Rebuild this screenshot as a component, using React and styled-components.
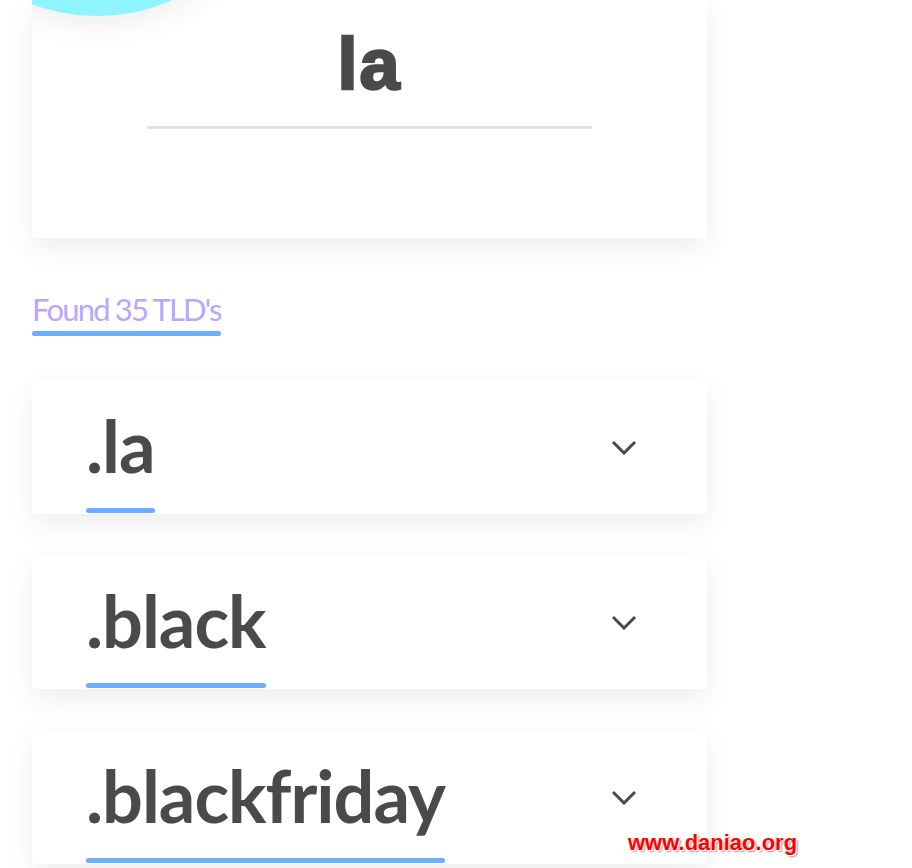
import React from 'react'
import styled, { createGlobalStyle } from 'styled-components'

const GlobalStyle = createGlobalStyle`
  html, body {
    margin: 0;
    padding: 0;
    background: #fff;
  }
  body {
    font-family: "Liberation Sans", Arial, sans-serif;
    overflow: hidden;
  }
`

const Page = styled.div`
  position: relative;
  width: 912px;
  height: 868px;
  padding: 0 0 0 32px;
  box-sizing: border-box;
  overflow: hidden;
`

const Column = styled.div`
  width: 675px;
  display: flex;
  flex-direction: column;
`

const HeroCard = styled.div`
  position: relative;
  height: 238px;
  background: #fff;
  border-radius: 0 0 4px 4px;
  box-shadow: 0 10px 28px rgba(0, 0, 0, 0.07);
  overflow: hidden;
  display: flex;
  flex-direction: column;
  align-items: center;
  padding-top: 22px;
  box-sizing: border-box;
`

const Bubble = styled.div`
  position: absolute;
  left: -120px;
  top: -354px;
  width: 370px;
  height: 370px;
  border-radius: 50%;
  background: #8ef5ff;
  box-shadow: 0 12px 26px rgba(0, 0, 0, 0.06);
`

const HeroName = styled.h1`
  margin: 0;
  font-family: "Liberation Sans", Arial, sans-serif;
  font-weight: 700;
  font-size: 72px;
  line-height: 84px;
  color: #4a4a4a;
  -webkit-text-stroke: 2.5px #4a4a4a;
  letter-spacing: 2px;
`

const Rule = styled.div`
  width: 445px;
  height: 3px;
  background: #e2e2e2;
  margin-top: 20px;
`

const Found = styled.div`
  margin-top: 53px;
  align-self: flex-start;
  display: flex;
  flex-direction: column;
`

const FoundText = styled.span`
  font-family: Lato, sans-serif;
  font-weight: 400;
  font-size: 31px;
  line-height: 36px;
  color: #b9a6ff;
  letter-spacing: -1.8px;
`

const Bar = styled.div`
  height: ${p => p.$h || 5}px;
  border-radius: 3px;
  background: #6aaeff;
  margin-top: ${p => p.$gap || 0}px;
`

const List = styled.div`
  margin-top: 44px;
  display: flex;
  flex-direction: column;
  gap: 41px;
`

const Card = styled.div`
  height: 134px;
  background: #fff;
  border-radius: 4px;
  box-shadow: 0 10px 28px rgba(0, 0, 0, 0.07);
  display: flex;
  align-items: center;
  justify-content: space-between;
  padding: 0 70px 0 54px;
  box-sizing: border-box;
`

const TitleBlock = styled.div`
  align-self: flex-end;
  display: flex;
  flex-direction: column;
  margin-bottom: 1px;
`

const Tld = styled.span`
  font-family: Lato, sans-serif;
  font-weight: 700;
  font-size: 72px;
  line-height: 80px;
  color: #4a4a4a;
  letter-spacing: -1px;
`

const Chevron = () => (
  <svg width="26" height="16" viewBox="0 0 26 16">
    <path d="M2 3 L13 14 L24 3" fill="none" stroke="#4a4a4a" strokeWidth="3" />
  </svg>
)

const Watermark = styled.div`
  position: absolute;
  left: 628px;
  top: 830px;
  font-family: "Liberation Sans", Arial, sans-serif;
  font-weight: 700;
  font-size: 22px;
  color: #ff0000;
  text-shadow: 1px 1px 0 #fff, 2px 2px 2px #999;
`

const tlds = ['.la', '.black', '.blackfriday']

export default function App() {
  return (
    <Page>
      <GlobalStyle />
      <Column>
        <HeroCard>
          <Bubble />
          <HeroName>la</HeroName>
          <Rule />
        </HeroCard>
        <Found>
          <FoundText>Found 35 TLD's</FoundText>
          <Bar $h={5} $gap={4} />
        </Found>
        <List>
          {tlds.map(t => (
            <Card key={t}>
              <TitleBlock>
                <Tld>{t}</Tld>
                <Bar $h={5} $gap={23} />
              </TitleBlock>
              <Chevron />
            </Card>
          ))}
        </List>
      </Column>
      <Watermark>www.daniao.org</Watermark>
    </Page>
  )
}
